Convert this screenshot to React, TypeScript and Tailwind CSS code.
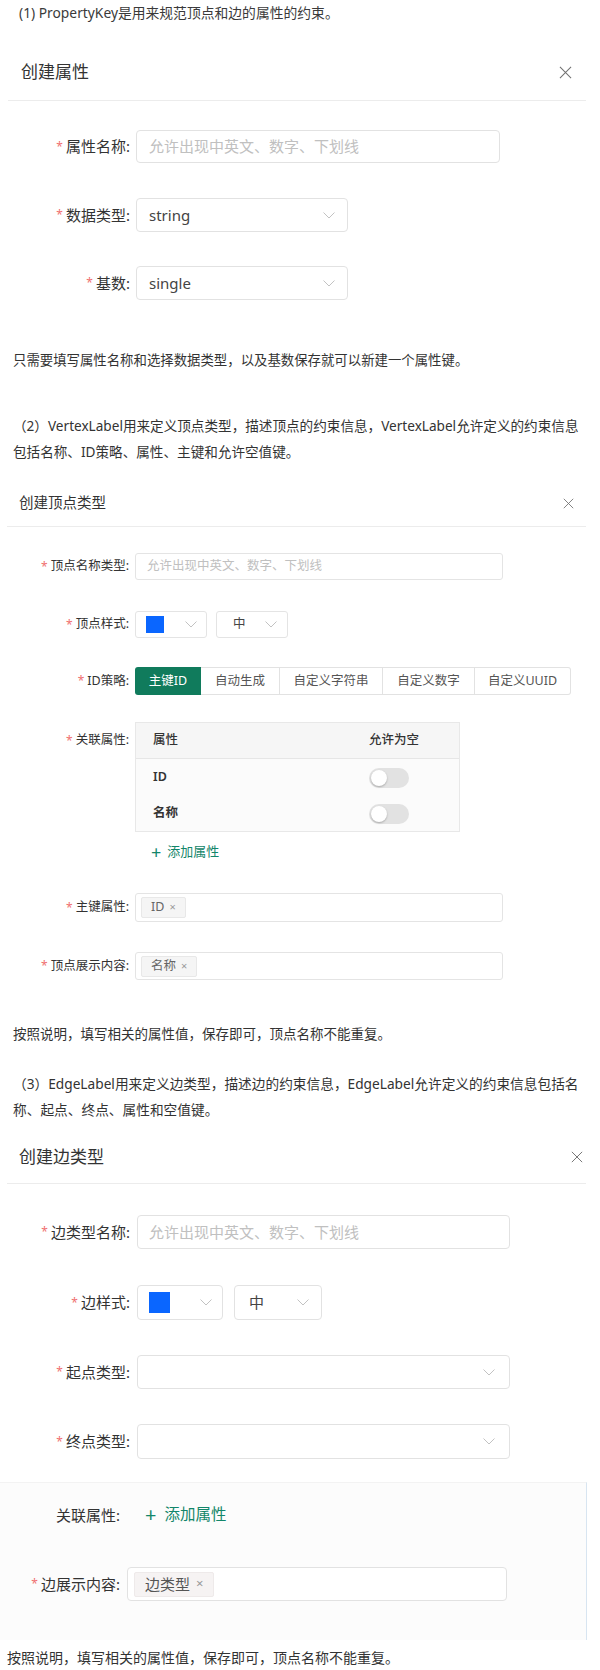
import React from "react";

const Chevron = () => (
  <svg width="12" height="7" viewBox="0 0 12 7" fill="none">
    <polyline points="0.5,0.5 6,6 11.5,0.5" stroke="#c2c2c2" strokeWidth="1" />
  </svg>
);

const CloseX = ({ size }: { size: number }) => (
  <svg width={size} height={size} viewBox="0 0 14 14" fill="none">
    <path d="M1 1L13 13M13 1L1 13" stroke="#707070" strokeWidth="1.1" />
  </svg>
);

const Star = () => <span className="text-[#f07070] text-[12px] mr-[3px] leading-none">*</span>;

const Toggle = () => (
  <div className="w-[40px] h-[20px] rounded-full bg-[#e2e2e2] flex items-center p-[2px]">
    <div className="w-[16px] h-[16px] rounded-full bg-white shadow-[0_1px_2px_rgba(0,0,0,0.25)]" />
  </div>
);

export default function App() {
  return (
    <div className="w-[600px] h-[1670px] overflow-hidden bg-white text-[#333] font-['Noto_Sans','Noto_Sans_CJK_SC',sans-serif]">
      {/* Section 1 */}
      <p className="h-[26px] leading-[26px] pl-[19px] text-[13.8px] text-[#3a3a3a] whitespace-nowrap">
        (1) PropertyKey是用来规范顶点和边的属性的约束。
      </p>

      <div className="mt-[26px] h-[40px] flex items-center justify-between pl-[21px] pr-[28px]">
        <span className="text-[17px] text-[#333]">创建属性</span>
        <CloseX size={13} />
      </div>
      <div className="mt-[8px] ml-[8px] w-[578px] h-px bg-[#ececec]" />

      <div className="mt-[29px] flex items-center">
        <div className="w-[130px] shrink-0 flex items-center justify-end text-[15px]">
          <Star />属性名称:
        </div>
        <div className="ml-[6px] w-[364px] h-[33px] border border-[#e2e2e2] rounded-[4px] flex items-center pl-[12px] text-[15px] text-[#c0c0c0]">
          允许出现中英文、数字、下划线
        </div>
      </div>

      <div className="mt-[35px] flex items-center">
        <div className="w-[130px] shrink-0 flex items-center justify-end text-[15px]">
          <Star />数据类型:
        </div>
        <div className="ml-[6px] w-[212px] h-[34px] border border-[#e2e2e2] rounded-[4px] flex items-center justify-between pl-[12px] pr-[12px] text-[15px] text-[#444]">
          <span>string</span>
          <Chevron />
        </div>
      </div>

      <div className="mt-[34px] flex items-center">
        <div className="w-[130px] shrink-0 flex items-center justify-end text-[15px]">
          <Star />基数:
        </div>
        <div className="ml-[6px] w-[212px] h-[34px] border border-[#e2e2e2] rounded-[4px] flex items-center justify-between pl-[12px] pr-[12px] text-[15px] text-[#444]">
          <span>single</span>
          <Chevron />
        </div>
      </div>

      <p className="mt-[47px] h-[26px] leading-[26px] pl-[13px] text-[13.4px] text-[#333] whitespace-nowrap">
        只需要填写属性名称和选择数据类型，以及基数保存就可以新建一个属性键。
      </p>

      {/* Section 2 */}
      <div className="mt-[40px] pl-[13px] text-[13.6px] text-[#333] leading-[26px] whitespace-nowrap">
        <div>（2）VertexLabel用来定义顶点类型，描述顶点的约束信息，VertexLabel允许定义的约束信息</div>
        <div>包括名称、ID策略、属性、主键和允许空值键。</div>
      </div>

      <div className="mt-[18px] h-[40px] flex items-center justify-between pl-[19px] pr-[26px]">
        <span className="text-[14.5px] text-[#333]">创建顶点类型</span>
        <CloseX size={11} />
      </div>
      <div className="mt-[3px] ml-[7px] w-[579px] h-px bg-[#ececec]" />

      <div className="mt-[26px] flex items-center">
        <div className="w-[129px] shrink-0 flex items-center justify-end text-[12.5px]">
          <Star />顶点名称类型:
        </div>
        <div className="ml-[6px] w-[368px] h-[27px] border border-[#e4e4e4] rounded-[3px] flex items-center pl-[11px] text-[12.5px] text-[#c0c0c0]">
          允许出现中英文、数字、下划线
        </div>
      </div>

      <div className="mt-[31px] flex items-center">
        <div className="w-[129px] shrink-0 flex items-center justify-end text-[12.5px]">
          <Star />顶点样式:
        </div>
        <div className="ml-[6px] w-[72px] h-[27px] border border-[#e4e4e4] rounded-[3px] flex items-center justify-between pl-[10px] pr-[9px]">
          <div className="w-[18px] h-[17px] bg-[#0a66ff]" />
          <Chevron />
        </div>
        <div className="ml-[9px] w-[72px] h-[27px] border border-[#e4e4e4] rounded-[3px] flex items-center justify-between pl-[16px] pr-[10px] text-[12.5px] text-[#444]">
          <span>中</span>
          <Chevron />
        </div>
      </div>

      <div className="mt-[29px] flex items-center">
        <div className="w-[129px] shrink-0 flex items-center justify-end text-[12.5px]">
          <Star />ID策略:
        </div>
        <div className="ml-[6px] flex h-[28px] text-[12.5px]">
          <div className="w-[66px] flex items-center justify-center bg-[#107b5c] text-white rounded-l-[3px]">主键ID</div>
          <div className="w-[79px] flex items-center justify-center border-y border-r border-[#e2e2e2] text-[#555]">自动生成</div>
          <div className="w-[103px] flex items-center justify-center border-y border-r border-[#e2e2e2] text-[#555]">自定义字符串</div>
          <div className="w-[92px] flex items-center justify-center border-y border-r border-[#e2e2e2] text-[#555]">自定义数字</div>
          <div className="w-[96px] flex items-center justify-center border-y border-r border-[#e2e2e2] text-[#555] rounded-r-[3px]">自定义UUID</div>
        </div>
      </div>

      <div className="mt-[27px] flex items-start">
        <div className="w-[129px] h-[37px] shrink-0 flex items-center justify-end text-[12.5px]">
          <Star />关联属性:
        </div>
        <div className="ml-[6px] w-[325px] h-[110px] border border-[#e8e8e8] bg-[#fbfbfb] flex flex-col text-[12.5px]">
          <div className="h-[36px] flex items-center bg-[#f6f6f6] border-b border-[#e6e6e6] text-[#333] font-medium">
            <span className="w-[233px] pl-[17px]">属性</span>
            <span>允许为空</span>
          </div>
          <div className="h-[37px] flex items-center">
            <span className="w-[233px] pl-[17px] font-semibold text-[#333]">ID</span>
            <Toggle />
          </div>
          <div className="h-[35px] flex items-center">
            <span className="w-[233px] pl-[17px] font-semibold text-[#333]">名称</span>
            <Toggle />
          </div>
        </div>
      </div>

      <div className="mt-[10px] h-[20px] flex items-center pl-[151px] text-[13px] text-[#13866a]">
        <span className="text-[18px] leading-none mr-[6px]">+</span>
        <span>添加属性</span>
      </div>

      <div className="mt-[31px] flex items-center">
        <div className="w-[129px] shrink-0 flex items-center justify-end text-[12.5px]">
          <Star />主键属性:
        </div>
        <div className="ml-[6px] w-[368px] h-[29px] border border-[#e4e4e4] rounded-[3px] flex items-center pl-[5px]">
          <div className="h-[21px] px-[9px] flex items-center gap-[5px] bg-[#f5f5f5] border border-[#e8e8e8] rounded-[2px] text-[12.5px] text-[#666]">
            <span>ID</span>
            <span className="text-[11px] text-[#999]">×</span>
          </div>
        </div>
      </div>

      <div className="mt-[30px] flex items-center">
        <div className="w-[129px] shrink-0 flex items-center justify-end text-[12.5px]">
          <Star />顶点展示内容:
        </div>
        <div className="ml-[6px] w-[368px] h-[28px] border border-[#e4e4e4] rounded-[3px] flex items-center pl-[5px]">
          <div className="h-[21px] px-[9px] flex items-center gap-[5px] bg-[#f5f5f5] border border-[#e8e8e8] rounded-[2px] text-[12.5px] text-[#666]">
            <span>名称</span>
            <span className="text-[11px] text-[#999]">×</span>
          </div>
        </div>
      </div>

      <p className="mt-[41px] h-[26px] leading-[26px] pl-[13px] text-[13.5px] text-[#333] whitespace-nowrap">
        按照说明，填写相关的属性值，保存即可，顶点名称不能重复。
      </p>

      {/* Section 3 */}
      <div className="mt-[24px] pl-[13px] text-[13.7px] text-[#333] leading-[26px] whitespace-nowrap">
        <div>（3）EdgeLabel用来定义边类型，描述边的约束信息，EdgeLabel允许定义的约束信息包括名</div>
        <div>称、起点、终点、属性和空值键。</div>
      </div>

      <div className="mt-[14px] h-[40px] flex items-center justify-between pl-[19px] pr-[17px]">
        <span className="text-[17px] text-[#333]">创建边类型</span>
        <CloseX size={12} />
      </div>
      <div className="mt-[6px] ml-[7px] w-[579px] h-px bg-[#ececec]" />

      <div className="mt-[31px] flex items-center">
        <div className="w-[130px] shrink-0 flex items-center justify-end text-[15px]">
          <Star />边类型名称:
        </div>
        <div className="ml-[7px] w-[373px] h-[34px] border border-[#e2e2e2] rounded-[4px] flex items-center pl-[11px] text-[15px] text-[#c0c0c0]">
          允许出现中英文、数字、下划线
        </div>
      </div>

      <div className="mt-[36px] flex items-center">
        <div className="w-[130px] shrink-0 flex items-center justify-end text-[15px]">
          <Star />边样式:
        </div>
        <div className="ml-[7px] w-[86px] h-[35px] border border-[#e2e2e2] rounded-[4px] flex items-center justify-between pl-[11px] pr-[10px]">
          <div className="w-[21px] h-[21px] bg-[#0a66ff]" />
          <Chevron />
        </div>
        <div className="ml-[11px] w-[88px] h-[35px] border border-[#e2e2e2] rounded-[4px] flex items-center justify-between pl-[14px] pr-[12px] text-[15px] text-[#444]">
          <span>中</span>
          <Chevron />
        </div>
      </div>

      <div className="mt-[35px] flex items-center">
        <div className="w-[130px] shrink-0 flex items-center justify-end text-[15px]">
          <Star />起点类型:
        </div>
        <div className="ml-[7px] w-[373px] h-[34px] border border-[#e2e2e2] rounded-[4px] flex items-center justify-end pr-[14px]">
          <Chevron />
        </div>
      </div>

      <div className="mt-[35px] flex items-center">
        <div className="w-[130px] shrink-0 flex items-center justify-end text-[15px]">
          <Star />终点类型:
        </div>
        <div className="ml-[7px] w-[373px] h-[35px] border border-[#e2e2e2] rounded-[4px] flex items-center justify-end pr-[14px]">
          <Chevron />
        </div>
      </div>

      <div className="mt-[23px] w-[587px] h-[158px] bg-[#fcfcfc] border-r border-[#d8e5f1] border-t border-t-[#f3f3f3] flex flex-col">
        <div className="mt-[20px] h-[24px] flex items-center">
          <div className="w-[120px] shrink-0 flex items-center justify-end text-[15px] text-[#333]">关联属性:</div>
          <div className="ml-[25px] flex items-center text-[15.5px] text-[#13866a]">
            <span className="text-[20px] leading-none mr-[8px]">+</span>
            <span>添加属性</span>
          </div>
        </div>
        <div className="mt-[40px] flex items-center">
          <div className="w-[120px] shrink-0 flex items-center justify-end text-[15px]">
            <Star />边展示内容:
          </div>
          <div className="ml-[7px] w-[380px] h-[34px] border border-[#e2e2e2] rounded-[4px] bg-white flex items-center pl-[6px]">
            <div className="h-[25px] px-[10px] flex items-center gap-[6px] bg-[#f6f3f3] border border-[#eeeaea] rounded-[2px] text-[15px] text-[#555]">
              <span>边类型</span>
              <span className="text-[13px] text-[#999]">×</span>
            </div>
          </div>
        </div>
      </div>

      <p className="mt-[5px] h-[26px] leading-[26px] pl-[7px] text-[14px] text-[#333] whitespace-nowrap">
        按照说明，填写相关的属性值，保存即可，顶点名称不能重复。
      </p>
    </div>
  );
}
